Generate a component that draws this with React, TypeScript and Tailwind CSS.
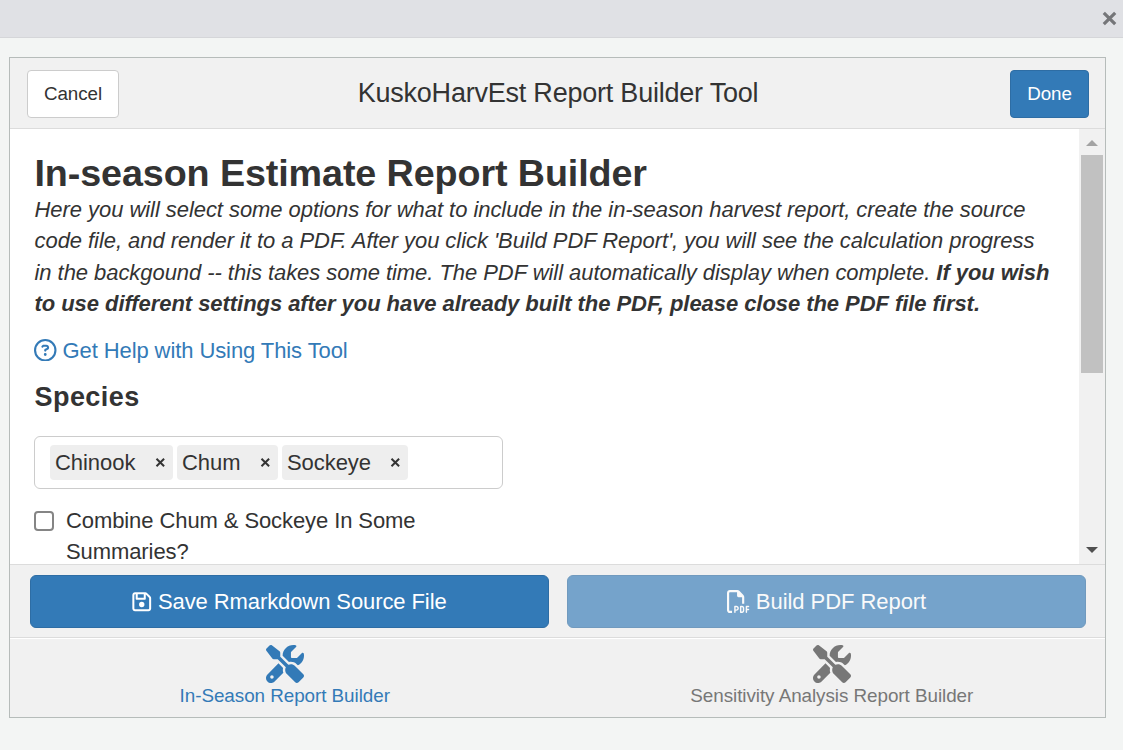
import React from "react";
import { FaRegCircleQuestion, FaRegFilePdf, FaRegFloppyDisk, FaScrewdriverWrench } from "react-icons/fa6";

function Tag({ label, className }: { label: string; className: string }) {
  return (
    <div className={`flex h-[35px] items-center justify-between rounded-[4px] bg-[#eeeeee] pl-[5px] pr-[7px] ${className}`}>
      <span>{label}</span>
      <svg width="11" height="11" viewBox="0 0 11 11" aria-label="remove">
        <path d="M1.5 1.8 9.1 9.2M9.1 1.8 1.5 9.2" stroke="#333" strokeWidth="2" />
      </svg>
    </div>
  );
}

export default function App() {
  return (
    <div className="flex h-[750px] w-[1123px] flex-col overflow-hidden bg-[#f3f5f4] font-['Liberation_Sans',Arial,sans-serif] text-[22px] leading-[31.4px] tracking-[-0.055px] text-[#333]">
      <div className="flex h-[38px] shrink-0 items-center justify-end border-b border-[#d5d6d9] bg-[#e0e1e5] pr-[6px]">
        <svg width="15" height="15" viewBox="0 0 15 15" aria-label="Close">
          <path d="M1.8 1.8 13.2 13.2M13.2 1.8 1.8 13.2" stroke="#757679" strokeWidth="3.2" />
        </svg>
      </div>

      <div className="ml-[9px] mt-[19px] flex h-[661px] w-[1097px] flex-col border border-[#b6bcba] bg-[#f1f1f1]">
        <header className="flex h-[71px] shrink-0 items-center justify-between border-b border-[#dcdcdc] pl-[17px] pr-4 pt-[2px]">
          <button className="h-[48px] w-[92px] rounded-[4px] border border-[#ccc] bg-white text-[18.8px]">Cancel</button>
          <h1 className="-ml-[13px] whitespace-nowrap text-[27px] tracking-[-0.22px]">KuskoHarvEst Report Builder Tool</h1>
          <button className="h-[48px] w-[79px] rounded-[4px] border border-[#2e6da4] bg-[#337ab7] text-[18.8px] text-white">Done</button>
        </header>

        <div className="flex h-[435px] shrink-0 overflow-hidden">
          <main className="w-[1069px] bg-white pl-6 pt-[23px]">
            <h2 className="ml-[0.5px] h-[42px] whitespace-nowrap text-[37.7px] font-bold leading-[42px] tracking-[-0.1px]">In-season Estimate Report Builder</h2>
            <p className="ml-[0.5px] whitespace-nowrap italic">
              Here you will select some options for what to include in the in-season harvest report, create the source
              <br />
              code file, and render it to a PDF. After you click 'Build PDF Report', you will see the calculation progress
              <br />
              in the backgound -- this takes some time. The PDF will automatically display when complete. <b>If you wish</b>
              <br />
              <b>to use different settings after you have already built the PDF, please close the PDF file first.</b>
            </p>
            <a className="mt-[15px] flex h-[32px] items-center gap-[6px] text-[#337ab7]">
              <FaRegCircleQuestion size={22.5} className="-mt-px" />
              <span className="tracking-[-0.09px]">Get Help with Using This Tool</span>
            </a>
            <h3 className="ml-[0.5px] mt-[15px] text-[27px] font-bold tracking-[0.45px]">Species</h3>
            <div className="mt-[23px] flex h-[53px] w-[469px] items-center gap-1 rounded-[6px] border border-[#ccc] pl-[15px]">
              <Tag label="Chinook" className="w-[123px]" />
              <Tag label="Chum" className="w-[101px]" />
              <Tag label="Sockeye" className="w-[126px]" />
            </div>
            <label className="mt-[16px] flex">
              <span className="mt-[6px] h-5 w-5 shrink-0 rounded-[4px] border-2 border-[#858585]" />
              <span className="ml-3 whitespace-nowrap tracking-[-0.09px]">
                Combine Chum &amp; Sockeye In Some
                <br />
                Summaries?
              </span>
            </label>
          </main>
          <div className="flex w-[26px] flex-col items-center bg-[#f1f1f1]">
            <svg className="my-[11px]" width="12" height="6" viewBox="0 0 12 6">
              <path d="M0 6 6 0l6 6z" fill="#a3a3a3" />
            </svg>
            <div className="-mt-[2px] h-[218px] w-[22px] bg-[#c1c1c1]" />
            <svg className="mb-[11px] mt-auto" width="12" height="6" viewBox="0 0 12 6">
              <path d="M0 0 6 6l6-6z" fill="#505050" />
            </svg>
          </div>
        </div>

        <div className="grid h-[73px] shrink-0 grid-cols-2 gap-[18px] border-t border-[#dcdcdc] pl-5 pr-[19px] pt-[10px]">
          <button className="flex h-[53px] items-center justify-center gap-[5px] rounded-[6px] border border-[#2e6da4] bg-[#337ab7] pr-px tracking-[-0.09px] text-white">
            <FaRegFloppyDisk size={21.5} />
            Save Rmarkdown Source File
          </button>
          <button className="flex h-[53px] items-center justify-center gap-[6px] rounded-[6px] border border-[#2e6da4] bg-[#337ab7] text-white opacity-65">
            <FaRegFilePdf size={23} />
            Build PDF Report
          </button>
        </div>

        <nav className="grid flex-1 grid-cols-2 border-t border-[#dcdcdc] text-[18.85px] leading-[24px]">
          <a className="flex flex-col items-center border-t border-white pl-[2px] pt-[6px] text-[#337ab7]">
            <FaScrewdriverWrench size={38} />
            <span className="mt-px">In-Season Report Builder</span>
          </a>
          <a className="flex flex-col items-center border-t border-white pl-px pt-[6px] text-[#777]">
            <FaScrewdriverWrench size={38} />
            <span className="mt-px">Sensitivity Analysis Report Builder</span>
          </a>
        </nav>
      </div>
    </div>
  );
}
